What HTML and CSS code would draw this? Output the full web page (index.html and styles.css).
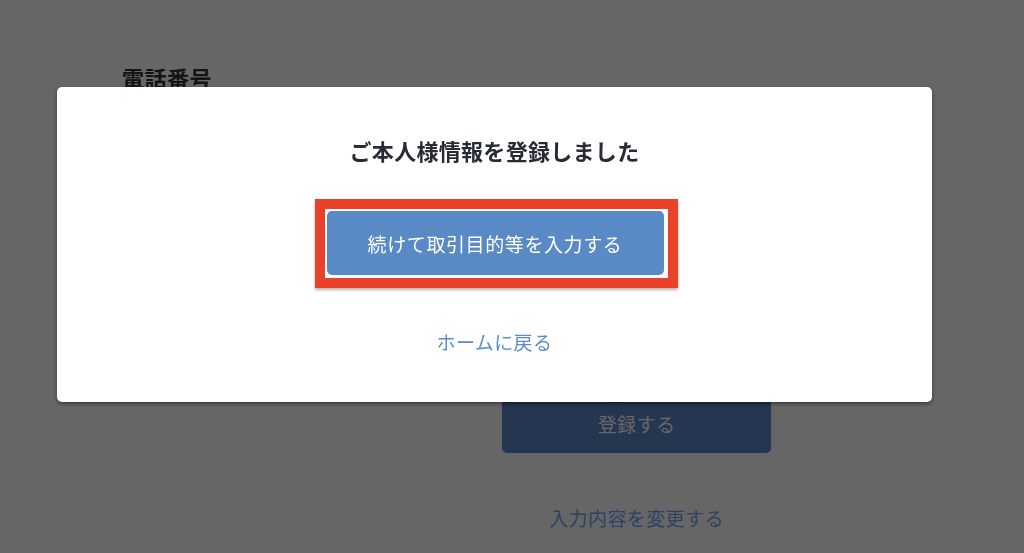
FILE: index.html
```html
<!DOCTYPE html>
<html lang="ja">
<head>
<meta charset="utf-8">
<title>ご本人様情報の登録</title>
<link rel="stylesheet" href="styles.css">
</head>
<body>
<div class="page">
  <h2 class="field-label">電話番号</h2>
  <div class="form-body"></div>
  <div class="actions">
    <button class="submit-btn">登録する</button>
    <a class="change-link" href="#">入力内容を変更する</a>
  </div>
</div>

<div class="overlay">
  <div class="modal">
    <h1 class="modal-title">ご本人様情報を登録しました</h1>
    <div class="highlight">
      <button class="primary-btn">続けて取引目的等を入力する</button>
    </div>
    <a class="home-link" href="#">ホームに戻る</a>
  </div>
</div>
</body>
</html>
```

FILE: styles.css
```css
* { box-sizing: border-box; }

html, body {
  margin: 0;
  padding: 0;
  width: 1024px;
  height: 553px;
  overflow: hidden;
  background: #ffffff;
  font-family: "Noto Sans CJK JP", "Noto Sans", sans-serif;
}

.page {
  padding: 64px 0 0 122px;
}

.field-label {
  margin: 0;
  font-size: 22px;
  line-height: 26px;
  font-weight: 700;
  letter-spacing: 0.5px;
  color: #333333;
}

.form-body {
  height: 303px;
}

.actions {
  margin-left: 380px;
  width: 269px;
  display: flex;
  flex-direction: column;
  align-items: center;
}

.submit-btn {
  width: 269px;
  height: 60px;
  border: none;
  border-radius: 5px;
  background: #5a87c8;
  color: #ffffff;
  font-family: inherit;
  font-size: 19px;
  letter-spacing: 0.4px;
}

.change-link {
  margin-top: 51px;
  font-size: 19px;
  line-height: 28px;
  letter-spacing: 0.4px;
  color: #74a6f4;
  text-decoration: none;
}

.overlay {
  position: fixed;
  inset: 0;
  background: rgba(0, 0, 0, 0.6);
}

.modal {
  position: absolute;
  left: 57px;
  top: 87px;
  width: 875px;
  height: 315px;
  background: #ffffff;
  border-radius: 5px;
  box-shadow: 0 2px 4px rgba(0, 0, 0, 0.45);
  display: flex;
  flex-direction: column;
  align-items: center;
  padding-top: 48px;
}

.modal-title {
  margin: 0;
  font-size: 22px;
  line-height: 30px;
  font-weight: 700;
  letter-spacing: 0.3px;
  color: #262b35;
}

.highlight {
  margin-top: 34px;
  margin-left: 3px;
  border: 10px solid #e9412a;
  padding: 2px 4px 3px 2px;
  background: #ffffff;
  box-shadow: 0 2px 3px rgba(0, 0, 0, 0.3);
}

.primary-btn {
  display: block;
  width: 337px;
  height: 64px;
  border: none;
  border-radius: 5px;
  background: #5a8ac6;
  color: #ffffff;
  font-family: inherit;
  font-size: 19px;
  letter-spacing: 0.6px;
}

.home-link {
  margin-top: 40px;
  font-size: 19px;
  line-height: 28px;
  letter-spacing: 0.4px;
  color: #5b8ccb;
  text-decoration: none;
}
```
